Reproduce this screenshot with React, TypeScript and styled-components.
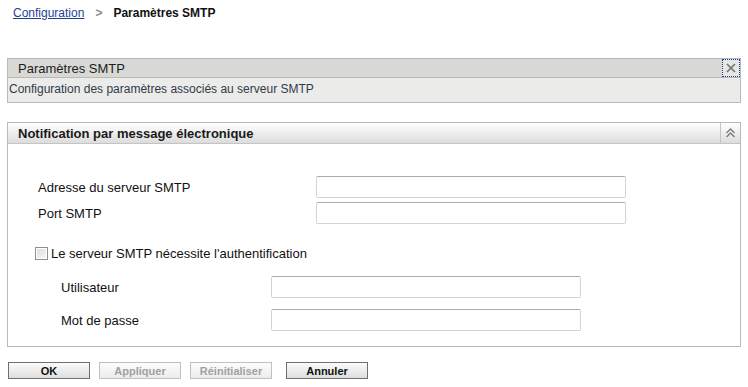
import styled, {createGlobalStyle} from 'styled-components'

const GlobalStyle = createGlobalStyle`
  body {
    margin: 0;
    background: #ffffff;
    font-family: "Liberation Sans", Arial, sans-serif;
    color: #000;
  }
`

const App = () => {
    return (
        <Page>
            <GlobalStyle/>
            <Breadcrumb>
                <CrumbLink href="#">Configuration</CrumbLink>
                <CrumbSep>&gt;</CrumbSep>
                <CrumbCurrent>Paramètres SMTP</CrumbCurrent>
            </Breadcrumb>

            <InfoPanel>
                <InfoHeader>
                    <InfoTitle>Paramètres SMTP</InfoTitle>
                    <CloseButton aria-label="Fermer">
                        <svg width="12" height="12" viewBox="0 0 12 12">
                            <path d="M2 2 L10 10 M10 2 L2 10" stroke="#707070" strokeWidth="1.6"/>
                        </svg>
                    </CloseButton>
                </InfoHeader>
                <InfoText>Configuration des paramètres associés au serveur SMTP</InfoText>
            </InfoPanel>

            <Section>
                <SectionHeader>
                    <SectionTitle>Notification par message électronique</SectionTitle>
                    <CollapseButton aria-label="Réduire">
                        <svg width="11" height="12" viewBox="0 0 11 12">
                            <path d="M1.5 6 L5.5 2 L9.5 6 M1.5 10 L5.5 6 L9.5 10" fill="none" stroke="#7a7a7a"
                                  strokeWidth="1.4"/>
                        </svg>
                    </CollapseButton>
                </SectionHeader>
                <SectionBody>
                    <FieldGrid labelWidth={278} indent={30} gap={4}>
                        <FieldLabel>Adresse du serveur SMTP</FieldLabel>
                        <TextInput type="text"/>
                        <FieldLabel>Port SMTP</FieldLabel>
                        <TextInput type="text"/>
                    </FieldGrid>

                    <CheckRow>
                        <CheckBox/>
                        <CheckLabel>Le serveur SMTP nécessite l'authentification</CheckLabel>
                    </CheckRow>

                    <FieldGrid labelWidth={210} indent={53} gap={11}>
                        <FieldLabel>Utilisateur</FieldLabel>
                        <TextInput type="text"/>
                        <FieldLabel>Mot de passe</FieldLabel>
                        <TextInput type="password"/>
                    </FieldGrid>
                </SectionBody>
            </Section>

            <ButtonBar>
                <ActionButton>OK</ActionButton>
                <ActionButton disabled>Appliquer</ActionButton>
                <ActionButton disabled>Réinitialiser</ActionButton>
                <ActionButton $gap>Annuler</ActionButton>
            </ButtonBar>
        </Page>
    )
}
export default App

// ==========================================

const Page = styled.div`
  width: 748px;
  height: 387px;
  padding: 0 7px;
  box-sizing: border-box;
  overflow: hidden;
`

const Breadcrumb = styled.div`
  height: 20px;
  padding: 3px 0 0 6px;
  display: flex;
  align-items: center;
  font-size: 12px;
`

const CrumbLink = styled.a`
  color: #1f3f93;
  text-decoration: underline;
`

const CrumbSep = styled.span`
  color: #8a8a8a;
  font-weight: 700;
  margin: 0 11px 0 11px;
`

const CrumbCurrent = styled.span`
  font-weight: 700;
  color: #111;
`

const InfoPanel = styled.div`
  margin-top: 35px;
  border: 1px solid #b9b9b9;
`

const InfoHeader = styled.div`
  height: 18px;
  background: #d8d9d5;
  border-bottom: 1px solid #b9b9b9;
  display: flex;
  align-items: center;
  justify-content: space-between;
`

const InfoTitle = styled.div`
  font-size: 13px;
  color: #1c1c1c;
  padding-left: 10px;
`

const CloseButton = styled.button`
  width: 18px;
  height: 18px;
  margin-right: 0;
  padding: 0;
  border: 1px dotted #1b3b9a;
  background: #e6e6e4;
  display: flex;
  align-items: center;
  justify-content: center;
`

const InfoText = styled.div`
  height: 24px;
  line-height: 23px;
  padding-left: 1px;
  background: #ebebea;
  font-size: 12px;
  color: #2f3b47;
`

const Section = styled.div`
  margin-top: 19px;
  border: 1px solid #b9b9b9;
`

const SectionHeader = styled.div`
  height: 20px;
  background: linear-gradient(#ffffff, #dcdcdc);
  border-bottom: 1px solid #c4c4c4;
  display: flex;
  align-items: stretch;
  justify-content: space-between;
`

const SectionTitle = styled.div`
  font-size: 13px;
  font-weight: 700;
  color: #1a1a1a;
  padding-left: 10px;
  display: flex;
  align-items: center;
`

const CollapseButton = styled.div`
  width: 19px;
  border-left: 1px solid #c4c4c4;
  display: flex;
  align-items: center;
  justify-content: center;
`

const SectionBody = styled.div`
  background: #ffffff;
  padding: 32px 0 15px 0;
`

const FieldGrid = styled.div<{ labelWidth: number; indent: number; gap: number }>`
  display: grid;
  grid-template-columns: ${(p) => p.labelWidth}px 310px;
  row-gap: ${(p) => p.gap}px;
  padding-left: ${(p) => p.indent}px;
  align-items: center;
`

const FieldLabel = styled.label`
  font-size: 13px;
  color: #111;
`

const TextInput = styled.input`
  height: 22px;
  box-sizing: border-box;
  border: 1px solid #d4d4d8;
  border-top-color: #a9a9b0;
  border-radius: 2px;
  background: #fff;
`

const CheckRow = styled.div`
  display: flex;
  align-items: center;
  gap: 3px;
  padding-left: 27px;
  margin: 22px 0 15px 0;
`

const CheckBox = styled.span`
  width: 11px;
  height: 11px;
  border: 1px solid #8e8f8f;
  background: linear-gradient(135deg, #dcdcdc, #f8f8f8);
  box-shadow: inset 0 0 0 1px #ffffff;
`

const CheckLabel = styled.span`
  font-size: 13px;
  color: #111;
`

const ButtonBar = styled.div`
  display: flex;
  gap: 9px;
  margin-top: 15px;
  padding-left: 1px;
`

const ActionButton = styled.button<{ $gap?: boolean }>`
  width: 82px;
  height: 17px;
  padding: 0;
  margin-left: ${(p) => (p.$gap ? '5px' : '0')};
  border: 1px solid #6f6f6f;
  background: linear-gradient(#fbfbfb, #dedede);
  font-family: "Liberation Sans", Arial, sans-serif;
  font-size: 11px;
  font-weight: 700;
  color: #111;

  &:disabled {
    border-color: #c0c0c0;
    color: #a0a0a0;
    background: linear-gradient(#fdfdfd, #ececec);
  }
`
